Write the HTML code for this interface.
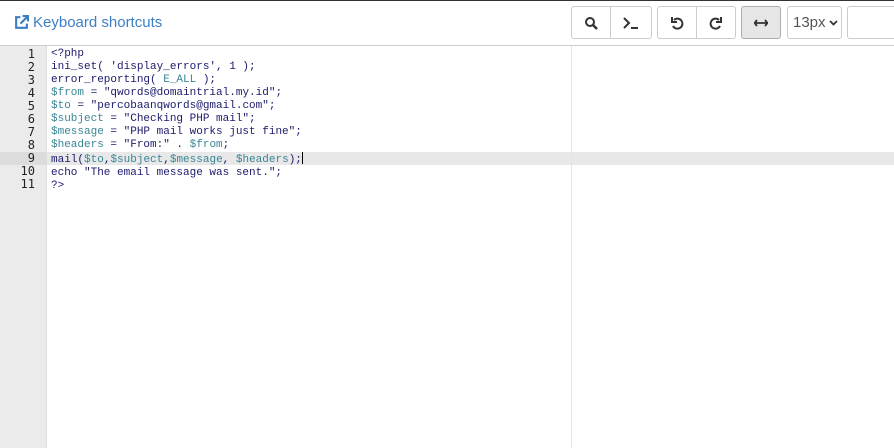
<!DOCTYPE html>
<html><head><style>
body{margin:0;width:894px;height:448px;overflow:hidden;background:#fff;font-family:"Liberation Sans",sans-serif;position:relative}
.top{position:absolute;left:0;top:0;width:894px;height:1px;background:#333}
.ks{position:absolute;left:14px;top:14px;color:#3d7fc4;font-size:15px;display:flex;align-items:center;gap:4px}
.btn{position:absolute;top:6px;height:33px;border:1px solid #ccc;background:#fff;box-sizing:border-box;display:flex;align-items:center;justify-content:center;color:#333}
.bar{position:absolute;left:0;top:45px;width:894px;height:1px;background:#ccc}
.gut{position:absolute;left:0;top:46px;width:46px;height:402px;background:#ebebeb;border-right:1px solid #ddd}
.ruler{position:absolute;left:571px;top:46px;width:1px;height:402px;background:#e4e4e4}
.hl{position:absolute;left:47px;top:152px;width:847px;height:13px;background:#e8e8e8}
.hlg{position:absolute;left:0;top:152px;width:46px;height:13px;background:#dcdcdc}
.num,.code{position:absolute;top:48px;font-family:"DejaVu Sans Mono","Liberation Mono",monospace;line-height:13px;white-space:pre}
.num{left:0;width:35px;text-align:right;color:#222;font-size:12px}
.code{left:51px;color:#1b1b6b;font-size:11px;font-family:"Liberation Mono",monospace}
.v{color:#3a8595}
.cur{display:inline-block;width:1px;height:12px;background:#000;vertical-align:-2px}
</style></head><body>
<div class="top"></div>
<div class="ks"><svg width="15" height="15" viewBox="0 0 14 14"><path d="M6 2H2v10h10V8" fill="none" stroke="#3d7fc4" stroke-width="2"/><path d="M8 1h5v5M13 1L6 8" fill="none" stroke="#3d7fc4" stroke-width="2"/></svg>Keyboard shortcuts</div>
<div class="btn" style="left:571px;width:40px;border-radius:3px 0 0 3px"><svg width="14" height="14" viewBox="0 0 14 14"><circle cx="6" cy="6" r="4" fill="none" stroke="#333" stroke-width="2"/><path d="M9 9l4 4" stroke="#333" stroke-width="2.5"/></svg></div>
<div class="btn" style="left:610px;width:42px;border-radius:0 3px 3px 0"><svg width="18" height="14" viewBox="0 0 18 14"><path d="M2 2l5 5-5 5" fill="none" stroke="#333" stroke-width="2"/><path d="M9 12h7" stroke="#333" stroke-width="2"/></svg></div>
<div class="btn" style="left:657px;width:40px;border-radius:3px 0 0 3px"><svg width="14" height="14" viewBox="0 0 14 14"><path d="M4 4a5 5 0 1 1 -1 6" fill="none" stroke="#333" stroke-width="2"/><path d="M2 1v5h5" fill="none" stroke="#333" stroke-width="2"/></svg></div>
<div class="btn" style="left:696px;width:40px;border-radius:0 3px 3px 0"><svg width="14" height="14" viewBox="0 0 14 14"><path d="M10 4a5 5 0 1 0 1 6" fill="none" stroke="#333" stroke-width="2"/><path d="M12 1v5H7" fill="none" stroke="#333" stroke-width="2"/></svg></div>
<div class="btn" style="left:741px;width:40px;background:#e6e6e6;border-color:#adadad;border-radius:3px"><svg width="14" height="8" viewBox="0 0 14 8"><path d="M1 4h12M3 1L0.5 4 3 7M11 1l2.5 3L11 7" fill="none" stroke="#333" stroke-width="1.8"/></svg></div>
<div class="btn" style="left:787px;width:55px;border-radius:3px;font-size:15px;color:#555;justify-content:flex-start;padding-left:5px">13px<svg style="margin-left:3px" width="9" height="6" viewBox="0 0 9 6"><path d="M1 1l3.5 3.5L8 1" fill="none" stroke="#333" stroke-width="1.8"/></svg></div>
<div class="btn" style="left:847px;width:60px;border-radius:3px"></div>
<div class="bar"></div>
<div class="gut"></div>
<div class="hlg"></div>
<div class="hl"></div>
<div class="ruler"></div>
<div class="num">1
2
3
4
5
6
7
8
9
10
11</div>
<div class="code">&lt;?php
ini_set( 'display_errors', 1 );
error_reporting( <span class="v">E_ALL</span> );
<span class="v">$from</span> = "qwords@domaintrial.my.id";
<span class="v">$to</span> = "percobaanqwords@gmail.com";
<span class="v">$subject</span> = "Checking PHP mail";
<span class="v">$message</span> = "PHP mail works just fine";
<span class="v">$headers</span> = "From:" . <span class="v">$from</span>;
mail(<span class="v">$to</span>,<span class="v">$subject</span>,<span class="v">$message</span>, <span class="v">$headers</span>);<span class="cur"></span>
echo "The email message was sent.";
?&gt;</div>
</body></html>
